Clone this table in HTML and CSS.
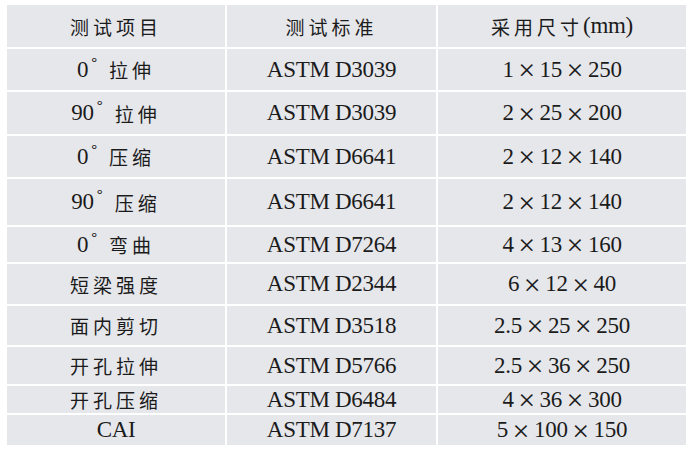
FILE: index.html
```html
<!DOCTYPE html>
<html lang="zh">
<head>
<meta charset="utf-8">
<link rel="stylesheet" href="styles.css">
</head>
<body>
<div class="table">
  <div class="c cn">测试项目</div><div class="c cn">测试标准</div><div class="c cn">采用尺寸<span class="lat">(mm)</span></div>

  <div class="c cn"><span class="lat">0</span><span class="deg">°</span>拉伸</div><div class="c">ASTM D3039</div><div class="c">1<span class="x">×</span>15<span class="x">×</span>250</div>

  <div class="c cn"><span class="lat">90</span><span class="deg">°</span>拉伸</div><div class="c">ASTM D3039</div><div class="c">2<span class="x">×</span>25<span class="x">×</span>200</div>

  <div class="c cn"><span class="lat">0</span><span class="deg">°</span>压缩</div><div class="c">ASTM D6641</div><div class="c">2<span class="x">×</span>12<span class="x">×</span>140</div>

  <div class="c cn"><span class="lat">90</span><span class="deg">°</span>压缩</div><div class="c">ASTM D6641</div><div class="c">2<span class="x">×</span>12<span class="x">×</span>140</div>

  <div class="c cn"><span class="lat">0</span><span class="deg">°</span>弯曲</div><div class="c">ASTM D7264</div><div class="c">4<span class="x">×</span>13<span class="x">×</span>160</div>

  <div class="c cn">短梁强度</div><div class="c">ASTM D2344</div><div class="c">6<span class="x">×</span>12<span class="x">×</span>40</div>

  <div class="c cn">面内剪切</div><div class="c">ASTM D3518</div><div class="c">2.5<span class="x">×</span>25<span class="x">×</span>250</div>

  <div class="c cn">开孔拉伸</div><div class="c">ASTM D5766</div><div class="c">2.5<span class="x">×</span>36<span class="x">×</span>250</div>

  <div class="c cn">开孔压缩</div><div class="c">ASTM D6484</div><div class="c">4<span class="x">×</span>36<span class="x">×</span>300</div>

  <div class="c">CAI</div><div class="c">ASTM D7137</div><div class="c">5<span class="x">×</span>100<span class="x">×</span>150</div>
</div>
</body>
</html>
```

FILE: styles.css
```css
html, body {
  margin: 0;
  padding: 0;
  background: #ffffff;
}
body {
  padding: 5px 0 0 7px;
  font-family: "Liberation Serif", "Noto Sans CJK SC", serif;
  color: #1b1b1b;
}
.table {
  display: grid;
  grid-template-columns: 218px 209px 248px;
  grid-template-rows: 42px 41px 42px 41px 46px 35px 40px 39px 37px 27px 30px;
  gap: 2px;
  width: 679px;
}
.c {
  background: #e6e7eb;
  display: flex;
  align-items: center;
  justify-content: center;
  font-size: 23px;
  letter-spacing: -0.3px;
  white-space: nowrap;
}
.cn {
  font-family: "Noto Sans CJK SC", sans-serif;
  font-size: 19px;
  letter-spacing: 4px;
}
.lat {
  font-family: "Liberation Serif", serif;
  font-size: 23px;
  letter-spacing: -0.3px;
}
.deg {
  font-family: "Noto Sans CJK SC", sans-serif;
  font-size: 16px;
  position: relative;
  top: -7px;
  margin: 0 12px 0 3px;
  letter-spacing: 0;
}
.x {
  display: inline-block;
  width: 26px;
  text-align: center;
  font-size: 30px;
  line-height: 23px;
  letter-spacing: 0;
  font-weight: 300;
}
```
